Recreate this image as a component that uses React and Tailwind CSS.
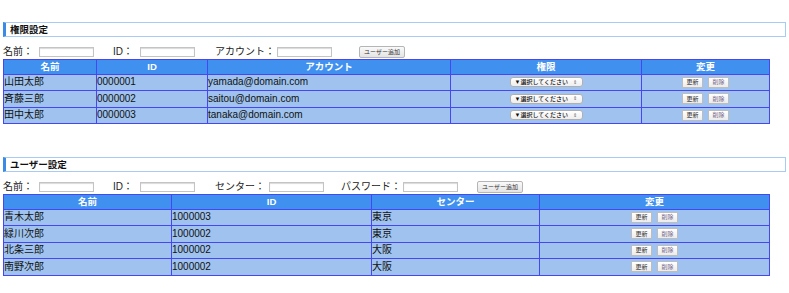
const jp = { fontFamily: '"Liberation Sans", "Noto Sans CJK JP", sans-serif' };

const users1 = [
  { name: '山田太郎', id: '0000001', account: 'yamada@domain.com' },
  { name: '斉藤三郎', id: '0000002', account: 'saitou@domain.com' },
  { name: '田中太郎', id: '0000003', account: 'tanaka@domain.com' },
];

const users2 = [
  { name: '青木太郎', id: '1000003', center: '東京' },
  { name: '緑川次郎', id: '1000002', center: '東京' },
  { name: '北条三郎', id: '1000002', center: '大阪' },
  { name: '南野次郎', id: '1000002', center: '大阪' },
];

function Title({ children }) {
  return (
    <div className="ml-[3px] w-[783px] h-[15px] border border-[#a8cbf3] border-l-[3px] border-l-[#3b8be6] flex items-center pl-[4px]">
      <span className="text-[9.5px] font-bold text-[#111] leading-none">{children}</span>
    </div>
  );
}

function Field({ label, labelW, ml = 0 }) {
  return (
    <>
      <span className="text-[10px] text-[#222] leading-none shrink-0" style={{ width: labelW, marginLeft: ml }}>{label}</span>
      <span className="w-[55px] h-[10px] border border-[#c4c4c4] shadow-[inset_0_1px_1px_rgba(0,0,0,0.15)] bg-white shrink-0" />
    </>
  );
}

function AddButton({ ml }) {
  return (
    <span
      className="h-[12px] w-[46px] border border-[#b5b5b5] bg-gradient-to-b from-[#fafafa] to-[#e4e4e4] rounded-[2px] text-[6px] text-[#333] flex items-center justify-center leading-none shrink-0"
      style={{ marginLeft: ml }}
    >
      ユーザー追加
    </span>
  );
}

function SmallBtn({ children, muted }) {
  return (
    <span className={`inline-flex items-center justify-center w-[21px] h-[11px] border border-[#bdbdbd] bg-gradient-to-b from-white to-[#ececec] text-[6px] leading-none ${muted ? 'text-[#7a6a8a]' : 'text-[#333]'}`}>
      {children}
    </span>
  );
}

function Actions() {
  return (
    <div className="flex items-center justify-center gap-[5px]">
      <SmallBtn>更新</SmallBtn>
      <SmallBtn muted>削除</SmallBtn>
    </div>
  );
}

function FakeSelect() {
  return (
    <div className="flex justify-center">
      <span className="inline-flex items-center justify-between w-[73px] h-[10px] pl-[4px] pr-[5px] border border-[#b0b0b0] rounded-[3px] bg-gradient-to-b from-white to-[#eeeeee] text-[6px] font-medium leading-none text-[#111] whitespace-nowrap">
        <span>▼選択してください</span>
        <span className="text-[5px] text-[#666]">⇕</span>
      </span>
    </div>
  );
}

const th = 'bg-[#4090f0] text-white font-bold text-[9.5px] h-[14.5px] p-0 border border-[#4646f2] leading-none';
const td = 'bg-[#9fc3ee] text-[10px] text-[#111] h-[16.5px] p-0 border border-[#4646f2] leading-none';

export default function App() {
  return (
    <div className="w-[789px] h-[293px] bg-white overflow-hidden pt-[22px]" style={jp}>
      <Title>権限設定</Title>
      <div className="flex items-center h-[13px] mt-[8px] pl-[3px]">
        <Field label="名前：" labelW={36} />
        <Field label="ID：" labelW={27} ml={19} />
        <Field label="アカウント：" labelW={62} ml={20} />
        <AddButton ml={27} />
      </div>
      <table className="ml-[3px] mt-[1px] w-[766px] table-fixed border-collapse">
        <thead>
          <tr>
            <th className={`${th} w-[93px]`}>名前</th>
            <th className={`${th} w-[111px]`}>ID</th>
            <th className={`${th} w-[243px]`}>アカウント</th>
            <th className={`${th} w-[191px]`}>権限</th>
            <th className={`${th} w-[128px]`}>変更</th>
          </tr>
        </thead>
        <tbody>
          {users1.map((u) => (
            <tr key={u.id}>
              <td className={td}>{u.name}</td>
              <td className={td}>{u.id}</td>
              <td className={td}>{u.account}</td>
              <td className={td}><FakeSelect /></td>
              <td className={td}><Actions /></td>
            </tr>
          ))}
        </tbody>
      </table>

      <div className="mt-[33px]">
        <Title>ユーザー設定</Title>
      </div>
      <div className="flex items-center h-[13px] mt-[8px] pl-[3px]">
        <Field label="名前：" labelW={36} />
        <Field label="ID：" labelW={27} ml={19} />
        <Field label="センター：" labelW={54} ml={20} />
        <Field label="パスワード：" labelW={62} ml={17} />
        <AddButton ml={19} />
      </div>
      <table className="ml-[3px] mt-[1px] w-[766px] table-fixed border-collapse">
        <thead>
          <tr>
            <th className={`${th} w-[168px]`}>名前</th>
            <th className={`${th} w-[200px]`}>ID</th>
            <th className={`${th} w-[168px]`}>センター</th>
            <th className={`${th} w-[230px]`}>変更</th>
          </tr>
        </thead>
        <tbody>
          {users2.map((u) => (
            <tr key={u.name}>
              <td className={td}>{u.name}</td>
              <td className={td}>{u.id}</td>
              <td className={td}>{u.center}</td>
              <td className={td}><Actions /></td>
            </tr>
          ))}
        </tbody>
      </table>
    </div>
  );
}
